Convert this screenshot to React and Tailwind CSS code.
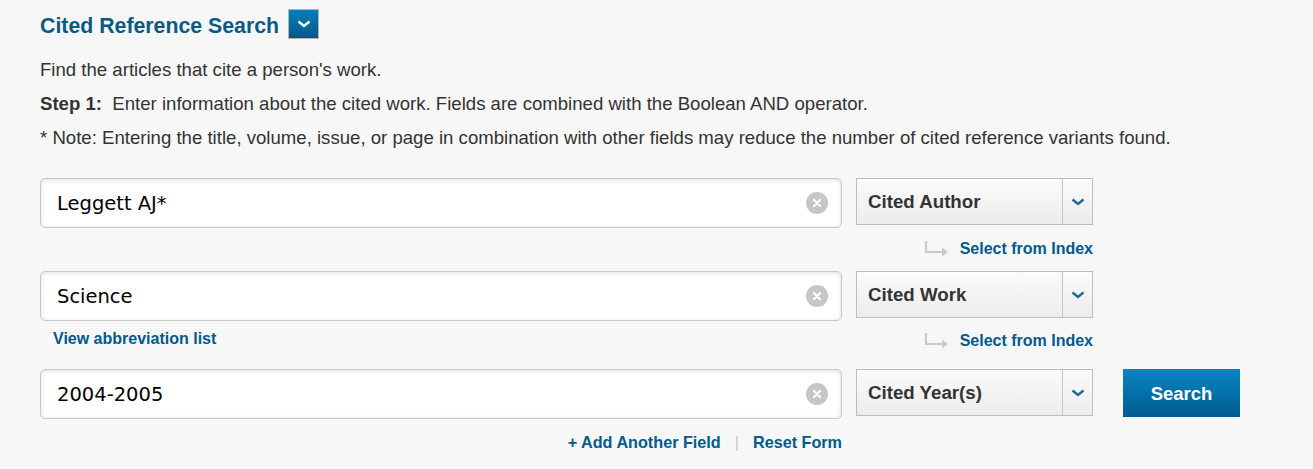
import { useState } from "react";

const arial = { fontFamily: '"Liberation Sans", Arial, sans-serif' };

function ClearButton() {
  return (
    <span className="flex h-[22px] w-[22px] items-center justify-center rounded-full bg-[#c6c6c6]">
      <svg width="10" height="10" viewBox="0 0 10 10">
        <path d="M2 2 L8 8 M8 2 L2 8" stroke="#fff" strokeWidth="2.4" strokeLinecap="round" />
      </svg>
    </span>
  );
}

function Chevron({ color = "#1f6a98" }) {
  return (
    <svg width="14" height="8" viewBox="0 0 14 8">
      <path d="M1.5 1.5 L7 6 L12.5 1.5" fill="none" stroke={color} strokeWidth="2.4" />
    </svg>
  );
}

function FieldInput({ value }) {
  const [text, setText] = useState(value);
  return (
    <div className="flex h-[50px] w-[802px] items-center rounded-[5px] border border-[#c8c8c8] bg-white pl-4 pr-[13px] shadow-[inset_0_1px_5px_rgba(0,0,0,0.13)]">
      <input
        className="flex-1 bg-transparent pt-[1px] text-[19.5px] text-black outline-none"
        style={{ fontFamily: '"DejaVu Sans", Verdana, sans-serif' }}
        value={text}
        onChange={(e) => setText(e.target.value)}
      />
      <ClearButton />
    </div>
  );
}

function FieldSelect({ label }) {
  return (
    <div className="flex h-[47px] w-[237px] border border-[#bdbdbd] bg-gradient-to-b from-[#fbfbfb] to-[#ececec]">
      <div className="flex flex-1 items-center pl-[11px] pt-[1px] text-[18.7px] font-bold text-[#333]">{label}</div>
      <div className="flex w-[30px] items-center justify-center border-l border-[#c4c4c4]">
        <Chevron />
      </div>
    </div>
  );
}

function SelectFromIndex() {
  return (
    <a className="flex items-center justify-end gap-[11px] text-[16px] font-bold leading-[18px] text-[#005a8c]" href="#">
      <svg width="26" height="16" viewBox="0 0 26 16">
        <path d="M3 0 V11 H20" fill="none" stroke="#c9c9c9" strokeWidth="2.2" />
        <path d="M19 6.5 L25 11 L19 15.5 Z" fill="#c9c9c9" />
      </svg>
      Select from Index
    </a>
  );
}

export default function App() {
  const rows = [
    { value: "Leggett AJ*", label: "Cited Author" },
    { value: "Science", label: "Cited Work" },
    { value: "2004-2005", label: "Cited Year(s)" },
  ];

  return (
    <div className="min-h-[469px] w-full bg-[#f7f7f7] pl-10 pt-[9px] text-[#333]" style={arial}>
      <div className="flex h-[29px] items-center gap-[9px]">
        <h2 className="mt-[7px] text-[21.3px] font-bold text-[#0b5a86]">Cited Reference Search</h2>
        <button className="flex h-[30px] w-[31px] items-center justify-center border border-[#b3b3b3] bg-gradient-to-b from-[#0a7fb8] to-[#00598a]">
          <Chevron color="#ffffff" />
        </button>
      </div>

      <div className="mt-[15px] text-[18.6px] leading-[34px]">
        <p>Find the articles that cite a person's work.</p>
        <p>
          <span className="font-bold">Step 1:</span>&nbsp; Enter information about the cited work. Fields are combined with the Boolean AND operator.
        </p>
        <p>* Note: Entering the title, volume, issue, or page in combination with other fields may reduce the number of cited reference variants found.</p>
      </div>

      <div className="mt-[23px]">
        {/* row 1 */}
        <div className="flex items-start gap-[14px]">
          <FieldInput value={rows[0].value} />
          <FieldSelect label={rows[0].label} />
        </div>
        <div className="flex h-[43px] gap-[14px]">
          <div className="w-[802px]" />
          <div className="w-[237px] pt-[12px]">
            <SelectFromIndex />
          </div>
        </div>

        {/* row 2 */}
        <div className="flex items-start gap-[14px]">
          <FieldInput value={rows[1].value} />
          <FieldSelect label={rows[1].label} />
        </div>
        <div className="flex h-[48px] gap-[14px]">
          <div className="w-[802px] pl-[13px] pt-[6px]">
            <a className="text-[16px] font-bold leading-[18px] text-[#005a8c]" href="#">
              View abbreviation list
            </a>
          </div>
          <div className="w-[237px] pt-[11px]">
            <SelectFromIndex />
          </div>
        </div>

        {/* row 3 */}
        <div className="flex items-start gap-[14px]">
          <FieldInput value={rows[2].value} />
          <FieldSelect label={rows[2].label} />
          <button className="ml-[16px] h-[48px] w-[117px] bg-gradient-to-b from-[#0a86c2] to-[#005c90] pt-[2px] text-[18.5px] font-bold text-white">
            Search
          </button>
        </div>
        <div className="flex w-[802px] items-center justify-end gap-[14px] pt-[14px] text-[16.2px] font-bold leading-[18px] text-[#005a8c]">
          <a href="#">+ Add Another Field</a>
          <span className="font-normal text-[#c8c8c8]">|</span>
          <a href="#">Reset Form</a>
        </div>
      </div>
    </div>
  );
}
